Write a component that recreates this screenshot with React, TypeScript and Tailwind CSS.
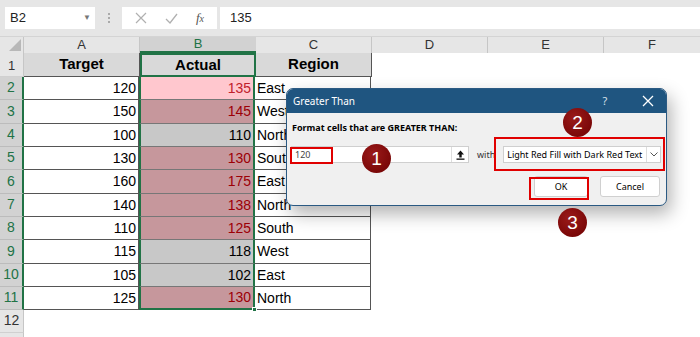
import React from "react";

const rows: { t: string; a: string; r: string; kind: "light" | "red" | "gray" }[] = [
  { t: "120", a: "135", r: "East", kind: "light" },
  { t: "150", a: "145", r: "West", kind: "red" },
  { t: "100", a: "110", r: "North", kind: "gray" },
  { t: "130", a: "130", r: "South", kind: "red" },
  { t: "160", a: "175", r: "East", kind: "red" },
  { t: "140", a: "138", r: "North", kind: "red" },
  { t: "110", a: "125", r: "South", kind: "red" },
  { t: "115", a: "118", r: "West", kind: "gray" },
  { t: "105", a: "102", r: "East", kind: "gray" },
  { t: "125", a: "130", r: "North", kind: "red" },
];

const heights = [23, 24, 23, 23, 24, 23, 23, 24, 23, 23];

function Circle({ n, className }: { n: string; className: string }) {
  return (
    <div
      className={`absolute w-[29px] h-[29px] rounded-full bg-[radial-gradient(circle_at_40%_35%,#9a1a1a,#6e0000)] text-white text-[19px] flex items-center justify-center leading-none ${className}`}
      style={{ fontFamily: "'Liberation Sans', Arial, sans-serif" }}
    >
      {n}
    </div>
  );
}

export default function App() {
  return (
    <div
      className="relative w-[700px] h-[337px] overflow-hidden bg-white"
      style={{ fontFamily: "'Liberation Sans', Arial, sans-serif" }}
    >
      {/* Formula bar */}
      <div className="h-[37px] bg-[#e6e6e6] flex items-start pt-[7px] pl-[5px] border-b border-[#d4d4d4]">
        <div className="w-[90px] h-[22px] bg-white flex items-center justify-between pl-[5px] pr-[4px] text-[13px] text-[#222]">
          <span>B2</span>
          <span className="text-[8px] text-[#777]">▼</span>
        </div>
        <div className="w-[27px] h-[22px] flex flex-col items-center justify-center gap-[2px]">
          <div className="w-[2px] h-[2px] bg-[#aaa]" />
          <div className="w-[2px] h-[2px] bg-[#aaa]" />
          <div className="w-[2px] h-[2px] bg-[#aaa]" />
        </div>
        <div className="w-[95px] h-[22px] bg-white flex items-center justify-around px-[4px] text-[#b5b5b5]">
          <svg width="12" height="12" viewBox="0 0 12 12">
            <path d="M1 1 L11 11 M11 1 L1 11" stroke="#b0b0b0" strokeWidth="1.2" />
          </svg>
          <svg width="13" height="11" viewBox="0 0 13 11">
            <path d="M1 6 L5 10 L12 1" stroke="#b0b0b0" strokeWidth="1.3" fill="none" />
          </svg>
          <span
            className="text-[13px] italic text-[#555]"
            style={{ fontFamily: "'Liberation Serif', serif" }}
          >
            f<span className="text-[10px]">x</span>
          </span>
        </div>
        <div className="ml-[3px] flex-1 h-[22px] bg-white flex items-center pl-[10px] text-[13px] text-[#222]">
          135
        </div>
      </div>

      {/* Column headers */}
      <div className="flex h-[16px] bg-[#e6e6e6] text-[13px] text-[#333]">
        <div className="w-[24px] h-full flex items-end justify-end pr-[2px] pb-[2px] border-r border-[#c6c6c6]">
          <svg width="12" height="12" viewBox="0 0 12 12">
            <path d="M12 0 L12 12 L0 12 Z" fill="#b8b8b8" />
          </svg>
        </div>
        <div className="w-[116px] h-full flex items-center justify-center border-r border-[#c6c6c6]">A</div>
        <div className="w-[116px] h-full flex items-center justify-center bg-[#d2d2d2] text-[#217346] border-b-2 border-[#217346]">B</div>
        <div className="w-[116px] h-full flex items-center justify-center border-r border-[#c6c6c6]">C</div>
        <div className="w-[116px] h-full flex items-center justify-center border-r border-[#c6c6c6]">D</div>
        <div className="w-[116px] h-full flex items-center justify-center border-r border-[#c6c6c6]">E</div>
        <div className="w-[96px] h-full flex items-center justify-center">F</div>
      </div>

      {/* Row 1 */}
      <div className="flex h-[24px]">
        <div className="w-[24px] h-full bg-[#e6e6e6] text-[#333] text-[13px] flex items-end justify-center pb-[1px] border-r border-[#c6c6c6] border-b border-b-[#d0d0d0]">
          1
        </div>
        <div className="w-[116px] h-full bg-[#d9d9d9] border-r border-b border-[#555] flex items-center justify-center font-bold text-[15px] text-black">
          Target
        </div>
        <div className="w-[116px] h-full bg-[#d9d9d9] border-2 border-[#217346] flex items-center justify-center font-bold text-[15px] text-black">
          Actual
        </div>
        <div className="w-[116px] h-full bg-[#d9d9d9] border-r border-b border-[#555] flex items-center justify-center font-bold text-[15px] text-black">
          Region
        </div>
        <div className="flex-1" />
      </div>

      {/* Data rows */}
      {rows.map((r, i) => {
        const bFill =
          r.kind === "light" ? "bg-[#ffc7ce]" : r.kind === "red" ? "bg-[#c6979c]" : "bg-[#c8c8c8]";
        const bText = r.kind === "gray" ? "text-black" : r.kind === "light" ? "text-[#c0202c]" : "text-[#9c0006]";
        const last = i === rows.length - 1;
        return (
          <div key={i} className="flex" style={{ height: heights[i] }}>
            <div className="w-[24px] h-full bg-[#d2d2d2] text-[#217346] text-[14px] flex items-end justify-center pb-[1px] border-r-2 border-r-[#217346] border-b border-b-[#bcbcbc]">
              {i + 2}
            </div>
            <div className="w-[115px] h-full border-r border-b border-[#555] flex items-center justify-end pr-[2px] text-[14px] text-black">
              {r.t}
            </div>
            <div
              className={`relative w-[116px] h-full border-x-2 border-[#217346] border-b ${last ? "border-b-2 border-b-[#217346]" : "border-b-[#777]"} ${bFill} ${bText} flex items-center justify-end pr-[2px] text-[14px]`}
            >
              {r.a}
              {last && <div className="absolute right-[-4px] bottom-[-4px] w-[5px] h-[5px] bg-[#217346] border border-white" />}
            </div>
            <div className="w-[116px] h-full border-r border-b border-[#555] flex items-center pl-[2px] text-[14px] text-black">
              {r.r}
            </div>
            <div className="flex-1" />
          </div>
        );
      })}

      {/* Row 12 */}
      <div className="flex h-[23px]">
        <div className="w-[24px] h-full bg-[#e6e6e6] text-[#333] text-[14px] flex items-end justify-center pb-[1px] border-r border-[#c6c6c6] border-b border-b-[#d0d0d0]">
          12
        </div>
        <div className="flex-1" />
      </div>
      <div className="flex h-[10px]">
        <div className="w-[24px] h-full bg-[#e6e6e6] border-r border-[#c6c6c6]" />
      </div>

      {/* Dialog */}
      <div
        className="absolute left-[286px] top-[88px] w-[381px] h-[118px] rounded-[7px] bg-[#f0f0f0] border border-[#2b5a83] shadow-[4px_8px_18px_rgba(0,0,0,0.3)] overflow-hidden"
        style={{ fontFamily: "'Noto Sans', 'Open Sans', sans-serif" }}
      >
        <div className="h-[24px] bg-[#1f5580] flex items-center text-white text-[10px] pl-[6px]">
          <span className="flex-1">Greater Than</span>
          <span className="w-[20px] text-center text-[11px] text-[#d6e0ea]">?</span>
          <span className="ml-[27px] mr-[12px] flex items-center">
            <svg width="12" height="12" viewBox="0 0 12 12">
              <path d="M1 1 L11 11 M11 1 L1 11" stroke="white" strokeWidth="1.3" />
            </svg>
          </span>
        </div>
        <div className="pl-[5px] pt-[9px] text-[9px] font-bold text-black leading-[12px]">
          Format cells that are GREATER THAN:
        </div>
        <div className="flex items-center mt-[12px] pl-[4px]">
          <div className="w-[178px] h-[17px] bg-white border border-[#cfcfcf] flex items-center">
            <span className="text-[9px] text-[#444] pl-[3px] flex-1">120</span>
            <div className="w-[17px] h-[15px] flex items-center justify-center border-l border-[#ddd]">
              <svg width="9" height="10" viewBox="0 0 9 10">
                <path d="M4.5 0.5 L8 4.5 L5.7 4.5 L5.7 7.5 L3.3 7.5 L3.3 4.5 L1 4.5 Z" fill="#111" />
                <rect x="0.5" y="8.5" width="8" height="1.3" fill="#111" />
              </svg>
            </div>
          </div>
          <span className="ml-[8px] text-[9px] text-[#333]">with</span>
          <div className="ml-[8px] w-[158px] h-[17px] bg-white border border-[#cfcfcf] flex items-center">
            <span className="flex-1 text-[9px] text-black pl-[3px] whitespace-nowrap overflow-hidden">Light Red Fill with Dark Red Text</span>
            <div className="w-[14px] h-[15px] border-l border-[#ddd] flex items-center justify-center">
              <svg width="8" height="5" viewBox="0 0 8 5">
                <path d="M0.5 0.5 L4 4 L7.5 0.5" stroke="#555" fill="none" strokeWidth="1" />
              </svg>
            </div>
          </div>
        </div>
        <div className="flex justify-end gap-[12px] mt-[13px] pr-[6px]">
          <div className="w-[54px] h-[21px] bg-white border border-[#d0d0d0] rounded-[3px] flex items-center justify-center text-[9px] text-black">
            OK
          </div>
          <div className="w-[60px] h-[21px] bg-white border border-[#d0d0d0] rounded-[3px] flex items-center justify-center text-[9px] text-black">
            Cancel
          </div>
        </div>
      </div>

      {/* Red highlight boxes */}
      <div className="absolute left-[290px] top-[147px] w-[43px] h-[17px] border-2 border-[#e00000]" />
      <div className="absolute left-[494px] top-[137px] w-[171px] h-[34px] border-2 border-[#e00000]" />
      <div className="absolute left-[529px] top-[177px] w-[60px] h-[23px] border-2 border-[#e00000]" />

      {/* Number circles */}
      <Circle n="1" className="left-[362px] top-[144px]" />
      <Circle n="2" className="left-[563px] top-[108px]" />
      <Circle n="3" className="left-[558px] top-[208px]" />
    </div>
  );
}
